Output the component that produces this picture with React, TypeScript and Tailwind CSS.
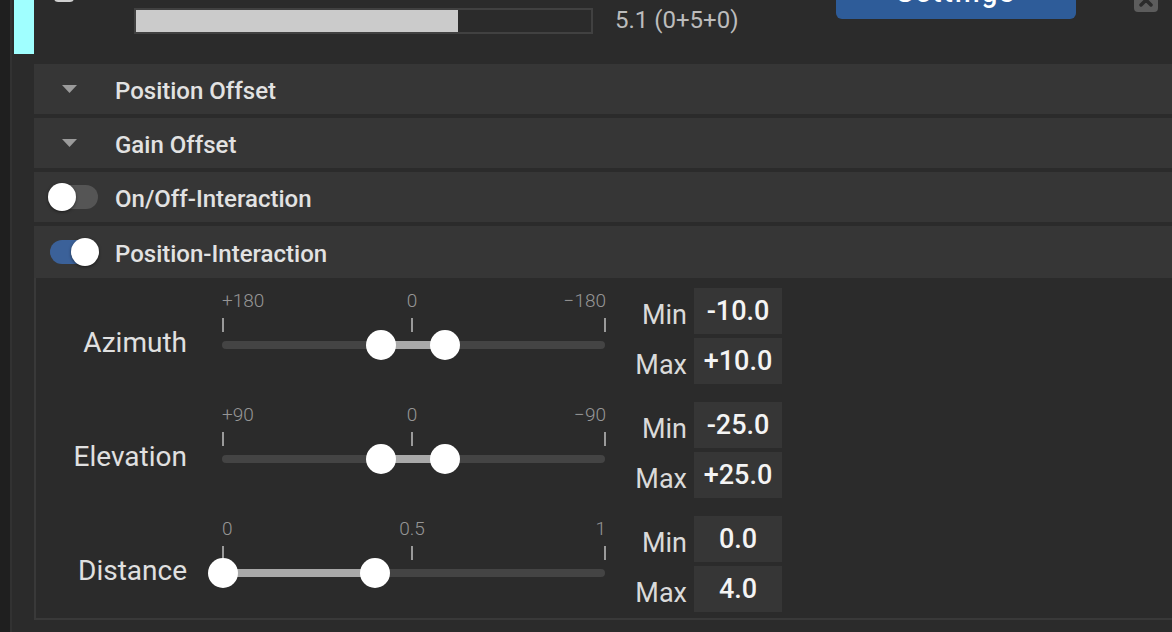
import React from 'react'

type Tick = { label: string; pos: 'start' | 'mid' | 'end' }

const Triangle = () => (
  <svg width="15" height="8" viewBox="0 0 15 8">
    <polygon points="0,0 15,0 7.5,8" fill="#9b9b9b" />
  </svg>
)

const Toggle = ({ on }: { on: boolean }) => (
  <div className="relative w-12 h-6 ml-4">
    <div className={`absolute inset-0 rounded-full ${on ? 'bg-[#3b6199]' : 'bg-[#555555]'}`} />
    <div
      className={`absolute top-[-2px] w-7 h-7 rounded-full bg-white shadow-[0_1px_3px_rgba(0,0,0,0.5)] ${on ? 'left-[21px]' : 'left-[-2px]'}`}
    />
  </div>
)

const Row = ({ title, icon, tall }: { title: string; icon: React.ReactNode; tall?: boolean }) => (
  <div className={`flex items-center bg-[#363636] ${tall ? 'h-[52px]' : 'h-[50px]'}`}>
    <div className="w-[81px] flex items-center">{icon}</div>
    <span className="text-[24px] leading-7 pt-[3px] font-medium text-[#e2e2e2]">{title}</span>
  </div>
)

const RangeSlider = ({ ticks, a, b }: { ticks: string[]; a: number; b: number }) => {
  const t: Tick[] = [
    { label: ticks[0], pos: 'start' },
    { label: ticks[1], pos: 'mid' },
    { label: ticks[2], pos: 'end' },
  ]
  return (
    <div className="relative w-[384px] h-[96px] shrink-0">
      {t.map((x) => (
        <span
          key={x.pos}
          className={`absolute top-[2px] text-[19px] leading-[22px] font-light text-[#969696] ${
            x.pos === 'start' ? 'left-0' : x.pos === 'mid' ? 'left-[190px] -translate-x-1/2' : 'right-0'
          }`}
        >
          {x.label}
        </span>
      ))}
      <div className="absolute top-[30px] left-0 w-[2px] h-[14px] bg-[#9a9a9a]" />
      <div className="absolute top-[30px] left-[189px] w-[2px] h-[14px] bg-[#9a9a9a]" />
      <div className="absolute top-[30px] right-0 w-[2px] h-[14px] bg-[#9a9a9a]" />
      <div className="absolute top-[53px] left-0 right-[1px] h-2 rounded bg-[#444444]" />
      <div className="absolute top-[53px] h-2 bg-[#a9a9a9]" style={{ left: a, width: b - a }} />
      <div className="absolute top-[42px] w-[30px] h-[30px] rounded-full bg-white" style={{ left: a - 15 }} />
      <div className="absolute top-[42px] w-[30px] h-[30px] rounded-full bg-white" style={{ left: b - 15 }} />
    </div>
  )
}

const MinMax = ({ min, max }: { min: string; max: string }) => (
  <div className="flex flex-col gap-1 ml-6">
    {[['Min', min], ['Max', max]].map(([l, v]) => (
      <div key={l} className="flex items-center h-[46px]">
        <span className="w-[57px] text-right text-[27px] text-[#dadada] pt-[8px]">{l}</span>
        <div className="ml-[7px] w-[88px] h-full bg-[#363636] flex items-center justify-center text-[27px] font-medium text-[#f4f4f4]">
          {v}
        </div>
      </div>
    ))}
  </div>
)

const Group = (p: { name: string; ticks: string[]; a: number; b: number; min: string; max: string }) => (
  <div className="flex items-start h-[96px]">
    <div className="w-[151px] mt-[39px] text-right text-[28px] leading-8 text-[#e0e0e0]">{p.name}</div>
    <div className="ml-[35px]">
      <RangeSlider ticks={p.ticks} a={p.a} b={p.b} />
    </div>
    <MinMax min={p.min} max={p.max} />
  </div>
)

export default function App() {
  return (
    <div className="w-full h-[632px] overflow-hidden flex bg-[#2b2b2b] font-[Roboto,sans-serif]">
      <div className="w-[10px] shrink-0 bg-[#1f1f1f]" />
      <div className="flex-1 flex flex-col border-l-2 border-[#323232] pl-[2px]">
        {/* top strip, scrolled partly out of view */}
        <div className="h-16 flex items-start overflow-hidden shrink-0">
          <div className="w-5 h-[54px] bg-[#a0ffff] shrink-0" />
          <div className="ml-5 -mt-[18px] w-5 h-5 rounded-sm border-2 border-[#cfcfcf] shrink-0" />
          <div className="ml-[60px] mt-2 w-[459px] h-[26px] border-2 border-[#414141] shrink-0">
            <div className="h-full w-[322px] bg-[#cbcbcb]" />
          </div>
          <div className="ml-[22px] -mt-[19px] w-[221px] flex flex-col shrink-0 text-[#bcbcbc]">
            <span className="text-[18px] leading-[22px] tracking-[6px]">Channels</span>
            <span className="mt-[3px] text-[24px] leading-[28px]">5.1 (0+5+0)</span>
          </div>
          <button className="-mt-[33px] w-[240px] h-[52px] rounded-md bg-[#2e5c99] text-white text-[28px] font-medium tracking-[2px] shrink-0">
            Settings
          </button>
          <div className="ml-[58px] -mt-3 w-6 h-6 rounded bg-[#5c5c5c] flex items-center justify-center shrink-0">
            <svg width="14" height="14" viewBox="0 0 14 14">
              <path d="M2 2 L12 12 M12 2 L2 12" stroke="#2b2b2b" strokeWidth="3.5" strokeLinecap="round" />
            </svg>
          </div>
        </div>

        <div className="ml-5 flex flex-col gap-1">
          <Row title="Position Offset" icon={<div className="ml-7 flex"><Triangle /></div>} />
          <Row title="Gain Offset" icon={<div className="ml-7 flex"><Triangle /></div>} />
          <Row title="On/Off-Interaction" icon={<Toggle on={false} />} />
        </div>
        <div className="ml-5 mt-1">
          <Row title="Position-Interaction" icon={<Toggle on />} tall />
        </div>

        <div className="ml-5 border-l-2 border-b-2 border-[#393939] pt-[10px] pb-[6px] flex flex-col gap-[18px]">
          <Group name="Azimuth" ticks={['+180', '0', '−180']} a={159} b={223} min="-10.0" max="+10.0" />
          <Group name="Elevation" ticks={['+90', '0', '−90']} a={159} b={223} min="-25.0" max="+25.0" />
          <Group name="Distance" ticks={['0', '0.5', '1']} a={1} b={153} min="0.0" max="4.0" />
        </div>
      </div>
    </div>
  )
}
